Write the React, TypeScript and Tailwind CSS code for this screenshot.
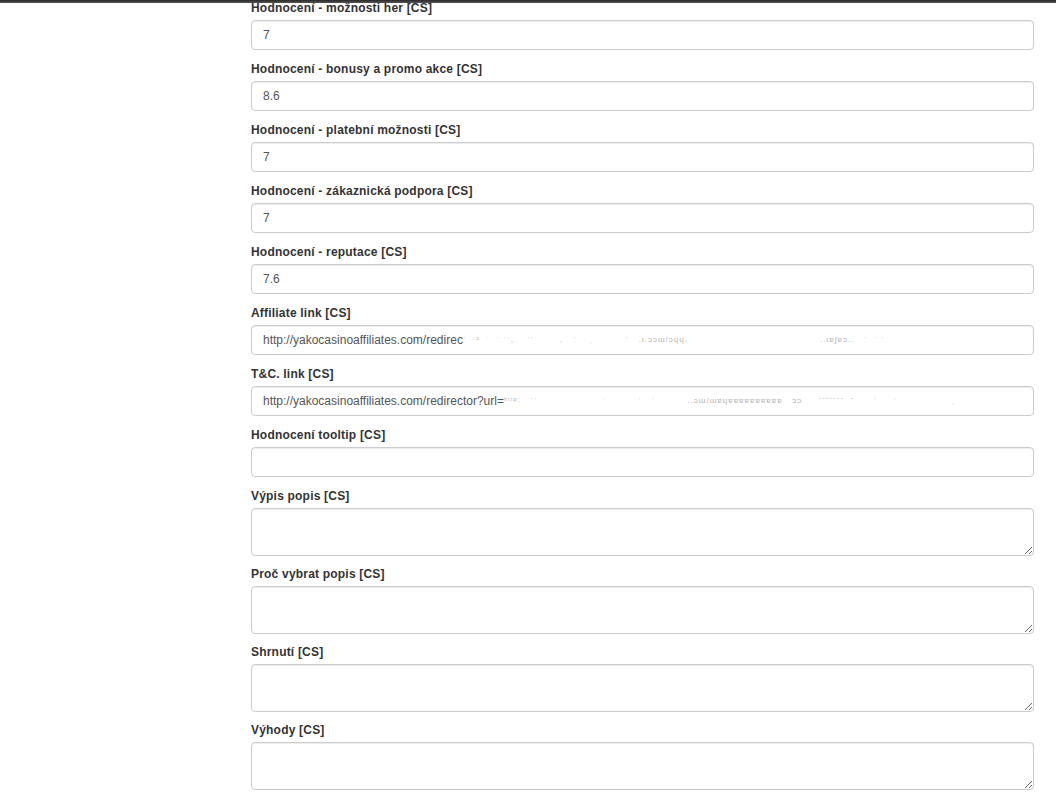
import React from "react";

interface Field {
  label: string;
  value?: string;
  blur?: string;
  area?: boolean;
}

const fields: Field[] = [
  { label: "Hodnocení - možnosti her [CS]", value: "7" },
  { label: "Hodnocení - bonusy a promo akce [CS]", value: "8.6" },
  { label: "Hodnocení - platební možnosti [CS]", value: "7" },
  { label: "Hodnocení - zákaznická podpora [CS]", value: "7" },
  { label: "Hodnocení - reputace [CS]", value: "7.6" },
  {
    label: "Affiliate link [CS]",
    value: "http://yakocasinoaffiliates.com/redirec",
    blur: "ˈ   ᵓ  ˈ  ˈ ˈˈ,    ˈˈ        ,   ˈ    ˌ          ˈ   .ɩ.ɔɔɯ/ɔɥɥ.                                         ..ɩɐʃɐɔ..   ˈ  ˈ ˈ",
  },
  {
    label: "T&C. link [CS]",
    value: "http://yakocasinoaffiliates.com/redirector?url=",
    blur: "ʰᵗᵗᵖ˸   ˈˈ                    ˈ          ˈ   ˈ          ..ɔɯ/ɯɐɥɐɐɐɐɐɐɐɐɐɐ   ɔɔ     ˉˉˉˉˉˉˉ  ˉ      ˈ     ˈ                 ˌ",
  },
  { label: "Hodnocení tooltip [CS]", value: "" },
  { label: "Výpis popis [CS]", area: true },
  { label: "Proč vybrat popis [CS]", area: true },
  { label: "Shrnutí [CS]", area: true },
  { label: "Výhody [CS]", area: true },
];

function FormRow({ f }: { f: Field }) {
  return (
    <div className={f.area ? "mb-[11px]" : "mb-[12px]"}>
      <label className="block h-[17px] mb-[2px] text-[12px] leading-[14px] font-bold tracking-[0.2px] text-[#333]">
        {f.label}
      </label>
      {f.area ? (
        <textarea
          className="block w-full h-[48px] border border-[#ccc] rounded-[4px] bg-white px-[11px] py-[6px] text-[12px] text-[#555] shadow-[inset_0_1px_1px_rgba(0,0,0,0.075)]"
          defaultValue=""
        />
      ) : (
        <div className="flex items-center h-[30px] border border-[#ccc] rounded-[4px] bg-white px-[11px] text-[12px] text-[#555] whitespace-nowrap overflow-hidden shadow-[inset_0_1px_1px_rgba(0,0,0,0.075)]">
          <span>{f.value}</span>
          {f.blur && (
            <span className="whitespace-pre text-[#b4b4b4] text-[8px] tracking-[1px]">{f.blur}</span>
          )}
        </div>
      )}
    </div>
  );
}

export default function App() {
  return (
    <div className="relative w-[1056px] h-[800px] overflow-hidden bg-white font-['Liberation_Sans',Arial,sans-serif]">
      <div className="absolute top-0 left-0 right-0 h-[3px] bg-gradient-to-b from-[#2a2a2a] to-[#555] z-10" />
      <div className="pt-px pl-[251px] pr-[22px]">
        {fields.map((f) => (
          <FormRow key={f.label} f={f} />
        ))}
      </div>
    </div>
  );
}
